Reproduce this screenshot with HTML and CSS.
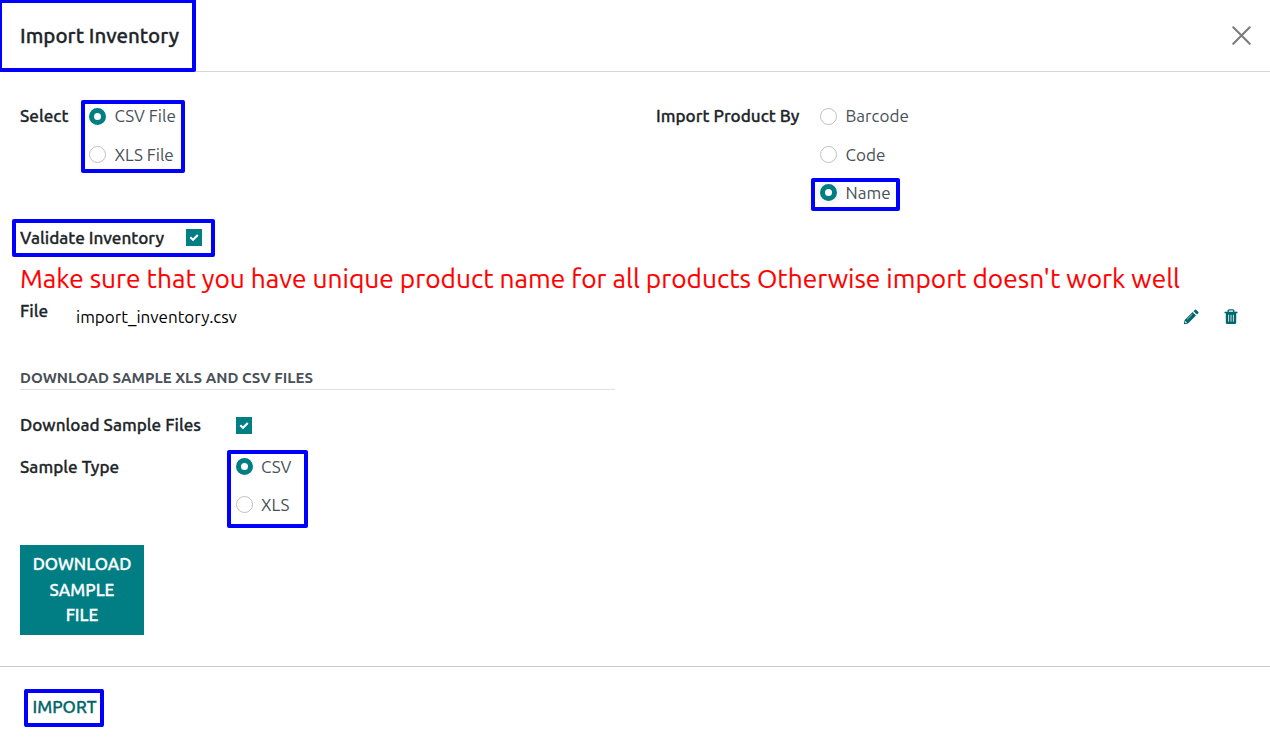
FILE: index.html
```html
<!DOCTYPE html>
<html lang="en">
<head>
<meta charset="utf-8">
<title>Import Inventory</title>
<link rel="stylesheet" href="styles.css">
</head>
<body>
<div class="dialog">
  <header class="header">
    <h1 class="title">Import Inventory</h1>
    <svg class="close" viewBox="0 0 18 18"><path d="M1.2 1.2 16.8 16.8M16.8 1.2 1.2 16.8" fill="none" stroke="#7c7c7c" stroke-width="2" stroke-linecap="round"/></svg>
    <span class="mark mark-title"></span>
  </header>
  <main class="body">
    <section class="options">
      <div class="field select">
        <span class="label">Select</span>
        <div class="radios">
          <div class="radio"><i class="dot on"></i><span>CSV File</span></div>
          <div class="radio"><i class="dot"></i><span class="low">XLS File</span></div>
          <span class="mark mark-select"></span>
        </div>
      </div>
      <div class="field product">
        <span class="label">Import Product By</span>
        <div class="radios">
          <div class="radio"><i class="dot"></i><span>Barcode</span></div>
          <div class="radio"><i class="dot"></i><span class="low">Code</span></div>
          <div class="radio"><i class="dot on focus"></i><span>Name</span><span class="mark mark-name"></span></div>
        </div>
      </div>
    </section>
    <div class="validate">
      <span class="label">Validate Inventory</span>
      <i class="check"><svg viewBox="0 0 16 17"><path d="M4.3 8.3 7 10.8 11.8 5.9" fill="none" stroke="#fff" stroke-width="2.1"/></svg></i>
      <span class="mark mark-validate"></span>
    </div>
    <p class="warning">Make sure that you have unique product name for all products Otherwise import doesn't work well</p>
    <div class="file">
      <span class="label">File</span>
      <span class="filename">import_inventory.csv</span>
      <svg class="pencil" viewBox="0 0 16 16"><path d="M.8 15.2 1.7 11 9.6 3.1l3.4 3.4L5 14.4Z" fill="#01666b"/><path d="m10.5 2.2 1.3-1.3q.8-.7 1.6 0l1.8 1.8q.7.8 0 1.6l-1.3 1.3Z" fill="#01666b"/><path d="m2.5 12.1 1.5 1.5-1.3.4-.6-.6Z" fill="#fff"/><path d="M4.2 10.3l5.2-5.1" stroke="#fff" stroke-width=".6"/></svg>
      <svg class="trash" viewBox="0 0 14 16"><path d="M4.2 3V1.8Q4.2.9 5.1.9h3.8q.9 0 .9.9V3" fill="none" stroke="#01666b" stroke-width="1.4"/><path d="M.5 2.8h13v1.5h-1.3v9.2q0 1.5-1.4 1.5H3.2q-1.4 0-1.4-1.5V4.3H.5Z" fill="#01666b"/><path d="M4.6 5.7v7M7 5.7v7M9.4 5.7v7" stroke="#fff" stroke-width=".8"/></svg>
    </div>
    <section class="samples">
      <h2 class="subtitle">DOWNLOAD SAMPLE XLS AND CSV FILES</h2>
      <div class="row first">
        <span class="label">Download Sample Files</span>
        <i class="check"><svg viewBox="0 0 16 17"><path d="M4.3 8.3 7 10.8 11.8 5.9" fill="none" stroke="#fff" stroke-width="2.1"/></svg></i>
      </div>
      <div class="row">
        <span class="label">Sample Type</span>
        <div class="radios">
          <div class="radio"><i class="dot on"></i><span>CSV</span></div>
          <div class="radio"><i class="dot"></i><span>XLS</span></div>
          <span class="mark mark-type"></span>
        </div>
      </div>
      <button class="download">DOWNLOAD SAMPLE FILE</button>
    </section>
  </main>
  <footer class="footer">
    <button class="import">IMPORT<span class="mark mark-import"></span></button>
  </footer>
</div>
</body>
</html>
```
FILE: styles.css
```css
* { box-sizing: border-box; }
body { margin: 0; background: #fff; color: #212529; font: 17.07px/26px Ubuntu, "Noto Sans", sans-serif; }
button { border: 0; font: inherit; padding: 0; }
svg { display: block; }
.dialog { width: 1270px; height: 748px; display: flex; flex-direction: column; overflow: hidden; white-space: nowrap; }
.header { position: relative; height: 72px; padding: 0 19px 0 20px; display: flex; align-items: center; justify-content: space-between; border-bottom: 1px solid #d6d6d6; }
.title { margin: 0; font-size: 20.5px; font-weight: 500; line-height: 30px; }
.title, .label, .download, .import { -webkit-text-stroke: .3px currentColor; }
.close { width: 19px; height: 19px; }
.mark { position: absolute; border: 4px solid #00f; border-radius: 2px; pointer-events: none; }
.mark-title { left: -2px; top: -1px; width: 198px; height: 73px; }
.body { height: 594px; padding: 31px 20px 0; }
.label { font-weight: 500; font-size: 17.12px; }
.options { display: grid; grid-template-columns: 636px 1fr; height: 121px; }
.field { display: flex; }
.select .label { width: 69px; }
.product .label { width: 164px; }
.radios { position: relative; color: #495057; }
.radio { position: relative; display: flex; align-items: center; gap: 8.5px; height: 26px; margin-bottom: 12.4px; }
.low { padding-top: 1px; }
.dot { width: 17px; height: 17px; flex: none; border: 1px solid #bfbfbf; border-radius: 50%; background: #fff; }
.dot.on { border: 5px solid #017e84; }
.dot.focus { box-shadow: 0 0 0 4px #f6f7fa; }
.mark-select { left: -8px; top: -3px; width: 104px; height: 73px; }
.mark-name { left: -9px; top: -2px; width: 89px; height: 33px; }
.validate { position: relative; display: flex; align-items: center; height: 28px; }
.validate .label { width: 166px; }
.validate .check { margin-top: -1px; }
.check { width: 16px; height: 17px; background: #017e84; }
.mark-validate { left: -8px; top: -5px; width: 203px; height: 38px; }
.warning { margin: 7px 0 0; color: #f00; font-size: 26.29px; line-height: 39px; -webkit-text-stroke: .15px currentColor; }
.file { display: flex; height: 67px; }
.file .label { width: 56px; }
.filename { flex: 1; color: #000; padding-top: 6px; }
.pencil { width: 16px; height: 16px; margin: 11px 25px 0 0; }
.trash { width: 14px; height: 16px; margin: 11px 12px 0 0; }
.samples { width: 595px; }
.subtitle { margin: 0; height: 25px; border-bottom: 1px solid #dee2e6; color: #495057; font-size: 15.02px; font-weight: 700; line-height: 26px; }
.row { display: flex; height: 42px; }
.row.first { margin-top: 22px; }
.row .label { width: 216px; }
.row .check { margin-top: 5px; }
.row .radio { gap: 8px; }
.row .dot { margin: -1px .5px 0 -.5px; }
.mark-type { left: -9px; top: -4px; width: 81px; height: 78px; }
.download { width: 124px; height: 90px; margin-top: 49px; padding: 0 12px 1px; background: #017e84; color: #fff; font-weight: 500; font-size: 17px; line-height: 25.6px; white-space: normal; }
.footer { height: 82px; border-top: 1px solid #c9c9cf; padding: 22px 24px; }
.import { position: relative; width: 80px; height: 38px; padding: 0 0 2px 1px; background: none; color: #01666b; font-weight: 500; }
.mark-import { left: 0; top: 0; width: 80px; height: 38px; }
```
